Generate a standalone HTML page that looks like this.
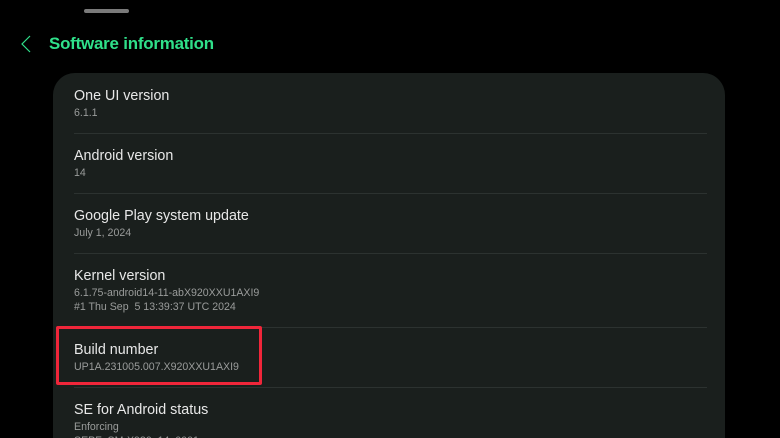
<!DOCTYPE html>
<html><head><meta charset="utf-8"><style>
html,body{margin:0;padding:0;background:#000;width:780px;height:438px;overflow:hidden;font-family:"Liberation Sans",sans-serif;}
body{position:relative;}
.handle{position:absolute;left:84px;top:9px;width:45px;height:4px;border-radius:2px;background:#7a7a7a;}
.title{position:absolute;left:49px;top:34px;font-size:16.9px;color:#2fe08a;font-weight:bold;letter-spacing:-0.2px;}
.back{position:absolute;left:19px;top:34px;}
.card{position:absolute;left:53px;top:73px;width:672px;height:365px;border-radius:22px 22px 0 0;background:#1a1f1d;}
.row{position:absolute;left:74px;}
.t{font-size:14.3px;color:#e8e8e8;line-height:18px;}
.s{font-size:10.6px;color:#9a9c9b;line-height:14px;margin-top:1px;}
.div{position:absolute;left:74px;width:633px;height:1px;background:#2c3230;}
.red{position:absolute;left:56px;top:326px;width:200px;height:53px;border:3.5px solid #f0263a;border-radius:2px;}
</style></head><body>
<div class="handle"></div>
<svg class="back" width="14" height="20" viewBox="0 0 14 20"><path d="M11 2 L3 10 L11 18" fill="none" stroke="#2fe08a" stroke-width="1.2"/></svg>
<div class="title">Software information</div>
<div class="card"></div>
<div class="row" style="top:87px"><div class="t">One UI version</div><div class="s">6.1.1</div></div>
<div class="div" style="top:133px"></div>
<div class="row" style="top:147px"><div class="t">Android version</div><div class="s">14</div></div>
<div class="div" style="top:193px"></div>
<div class="row" style="top:207px"><div class="t">Google Play system update</div><div class="s">July 1, 2024</div></div>
<div class="div" style="top:253px"></div>
<div class="row" style="top:267px"><div class="t">Kernel version</div><div class="s">6.1.75-android14-11-abX920XXU1AXI9<br>#1 Thu Sep&nbsp; 5 13:39:37 UTC 2024</div></div>
<div class="div" style="top:327px;left:262px;width:445px"></div>
<div class="row" style="top:341px"><div class="t">Build number</div><div class="s">UP1A.231005.007.X920XXU1AXI9</div></div>
<div class="div" style="top:387px"></div>
<div class="row" style="top:401px"><div class="t">SE for Android status</div><div class="s">Enforcing<br>SEPF_SM-X920_14_0001</div></div>
<div class="red"></div>
</body></html>
